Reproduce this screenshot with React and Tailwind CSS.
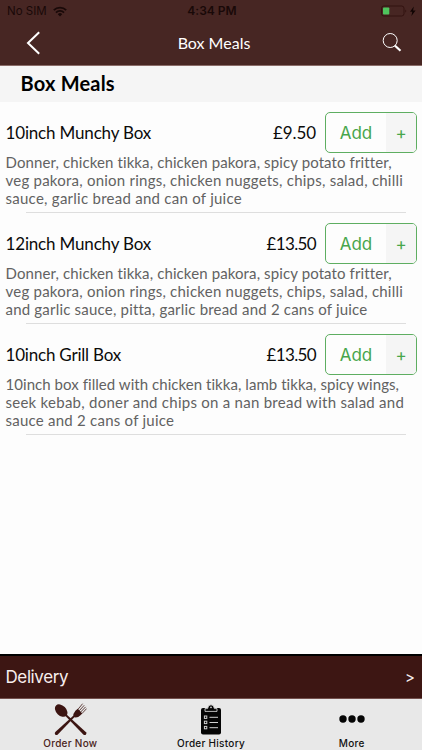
const items = [
  {
    name: '10inch Munchy Box',
    price: '£9.50',
    nameTracking: 'tracking-[-0.17px]',
    priceTracking: 'tracking-[-0.1px]',
    lines: [
      { text: 'Donner, chicken tikka, chicken pakora, spicy potato fritter,', tracking: 'tracking-[0.11px]' },
      { text: 'veg pakora, onion rings, chicken nuggets, chips, salad, chilli', tracking: 'tracking-[0.23px]' },
      { text: 'sauce, garlic bread and can of juice', tracking: 'tracking-[0.26px]' },
    ],
  },
  {
    name: '12inch Munchy Box',
    price: '£13.50',
    nameTracking: 'tracking-[-0.17px]',
    priceTracking: 'tracking-[-0.65px]',
    lines: [
      { text: 'Donner, chicken tikka, chicken pakora, spicy potato fritter,', tracking: 'tracking-[0.11px]' },
      { text: 'veg pakora, onion rings, chicken nuggets, chips, salad, chilli', tracking: 'tracking-[0.23px]' },
      { text: 'and garlic sauce, pitta, garlic bread and 2 cans of juice', tracking: 'tracking-[0.2px]' },
    ],
  },
  {
    name: '10inch Grill Box',
    price: '£13.50',
    nameTracking: 'tracking-[-0.2px]',
    priceTracking: 'tracking-[-0.65px]',
    lines: [
      { text: '10inch box filled with chicken tikka, lamb tikka, spicy wings,', tracking: 'tracking-[0.05px]' },
      { text: 'seek kebab, doner and chips on a nan bread with salad and', tracking: 'tracking-[0.26px]' },
      { text: 'sauce and 2 cans of juice', tracking: 'tracking-[0.24px]' },
    ],
  },
];

const WifiIcon = () => (
  <svg className="ml-[6px] h-[11px] w-[14px]" viewBox="0 0 14 11" fill="none" stroke="currentColor" strokeWidth="1.8">
    <path d="M0.8 4.2a8.8 8.8 0 0 1 12.4 0" />
    <path d="M3 6.6a5.7 5.7 0 0 1 8 0" />
    <path d="M7 10.4L4.8 8.2a3.1 3.1 0 0 1 4.4 0z" fill="currentColor" stroke="none" />
  </svg>
);

const BatteryIcon = () => (
  <svg className="h-[12px] w-[36px]" viewBox="0 0 36 12" fill="none">
    <rect x="0.5" y="1" width="22.5" height="10" rx="2.3" stroke="#331210" strokeWidth="1" />
    <rect x="2" y="2.5" width="6.3" height="7" rx="0.8" fill="#4fc45d" />
    <path d="M24.3 4.4c1.3.5 1.3 2.7 0 3.2z" fill="#331210" />
    <path d="M32.8 1.5L29 6.7h2.3L30.4 11l4.2-5.5h-2.5z" fill="#100403" />
  </svg>
);

const SearchIcon = () => (
  <svg className="-mt-[2px] h-[20px] w-[20px]" viewBox="0 0 20 20" fill="none" stroke="#fff">
    <circle cx="8.2" cy="7.5" r="7" strokeWidth="1" />
    <path d="M12.8 12.5L18.5 17.8" strokeWidth="2.2" />
  </svg>
);

const CutleryIcon = () => (
  <svg className="h-[33px] w-[33px]" viewBox="0 0 33 33" fill="#3c1512">
    <ellipse cx="7.2" cy="7.6" rx="5" ry="7.3" transform="rotate(-45 7.2 7.6)" />
    <path d="M11 12.4L12.3 11.2L32 29.2Q33 30.6 31.8 31.7Q30.6 32.6 29.3 31.5Z" />
    <path d="M19.5 12.5L20.8 13.8L3.8 31.5Q2.3 32.5 1.2 31.5Q.2 30.3 1.3 29Z" />
    <path d="M19.3 14Q18.8 10.5 21.4 7.7L23.8 5.8L28.3 10.5L26.2 12.5Q23.5 15.3 19.3 14Z" />
    <path d="M23.8 6.5L28.6 .7M25.2 7.8L30.2 2.3M26.6 9.1L31.6 3.9M28 10.5L32.6 5.6" stroke="#3c1512" strokeWidth="0.8" />
  </svg>
);

const ClipboardIcon = () => (
  <svg className="h-[31px] w-[22px]" viewBox="0 0 22 31" fill="#050505">
    <rect x="1" y="4" width="20" height="26.5" rx="2" />
    <path d="M5 4.6h2.6Q8 .8 11 .8T14.4 4.6h2.6v2.8H5z" stroke="#e8e8e8" strokeWidth="0.8" />
    <circle cx="11" cy="3.4" r="0.8" fill="#e8e8e8" />
    {[12, 17.2, 22.4].map((y) => (
      <g key={y} stroke="#d0d0d0" fill="none">
        <rect x="4.4" y={y} width="2.4" height="2.4" strokeWidth="1" />
        <path d={`M9.5 ${y + 1.3}H18`} strokeWidth="1" />
      </g>
    ))}
  </svg>
);

const MenuItem = ({ item }) => (
  <article className="h-[111px] pt-[10px] pr-[5px] pl-[5.5px]">
    <div className="flex h-[41px] items-center">
      <h2 className={`flex-1 text-[17px] text-[#0b0b0b] ${item.nameTracking}`}>{item.name}</h2>
      <span className={`mr-[9px] text-[17px] text-[#0b0b0b] ${item.priceTracking}`}>{item.price}</span>
      <button className="flex h-[41px] w-[92px] overflow-hidden rounded-[5px] border-[1.5px] border-[#5eae61] font-['Inter',sans-serif] text-[#47a64b]">
        <span className="flex flex-1 items-center justify-center pt-[2px] text-[17px]">Add</span>
        <span className="flex w-[30px] items-center justify-center bg-[#f5f5f5] pt-[2px] text-[17px]">+</span>
      </button>
    </div>
    <p className="text-[15px] leading-[18px] whitespace-nowrap text-[#626262]">
      {item.lines.map((line) => (
        <span key={line.text} className={`block ${line.tracking}`}>{line.text}</span>
      ))}
    </p>
    <div className="mt-[5px] mr-[11px] ml-[20.5px] h-px bg-[#dedede]" />
  </article>
);

const App = () => {
  return (
    <div className="flex h-[750px] w-[422px] flex-col overflow-hidden bg-[#fdfdfd] font-['Lato',sans-serif] [font-variant-ligatures:none]">
      <header className="h-[66px] border-b border-[#8a6c68] bg-[#472623]">
        <div className="grid h-[22px] grid-cols-3 items-center pr-[5px] pl-[7px] font-['Inter',sans-serif] text-[11.5px] text-[#190908]">
          <div className="flex items-center pt-px">No SIM<WifiIcon /></div>
          <span className="text-center text-[12px] font-semibold">4:34 PM</span>
          <div className="flex justify-end"><BatteryIcon /></div>
        </div>
        <div className="grid h-[43px] grid-cols-3 items-center pr-[20px] pl-[26px] text-white">
          <svg className="-mt-[2px] h-[24px] w-[15px]" viewBox="0 0 15 24" fill="none" stroke="#fff" strokeWidth="2">
            <path d="M13.2 1.3L2 12l11.2 10.7" />
          </svg>
          <h1 className="-mt-[2px] text-center text-[16px]">Box Meals</h1>
          <div className="flex justify-end"><SearchIcon /></div>
        </div>
      </header>

      <div className="flex h-[36px] items-center bg-[#f5f5f5] pb-[2px] pl-[20.5px] text-[20px] font-bold tracking-[0.2px] text-black">Box Meals</div>

      <main className="flex-1">
        {items.map((item) => <MenuItem key={item.name} item={item} />)}
      </main>

      <div className="flex h-[45px] items-center justify-between border-t-2 border-b border-t-black border-b-[#73504d] bg-[#3d1613] pr-[7px] pl-[5.5px] font-['Inter',sans-serif] text-[#f7eeed]">
        <span className="pt-[2px] text-[17px] tracking-[-0.4px]">Delivery</span>
        <span className="pt-[2px] text-[15px]">&gt;</span>
      </div>

      <nav className="grid h-[51px] grid-cols-3 bg-[#e8e8e8] font-['Inter',sans-serif] text-[10px] font-medium tracking-[0.27px] text-[#111]">
        <div className="flex flex-col items-center pt-[4px] text-[#4a2320]">
          <CutleryIcon />
          <span className="leading-[14px]">Order Now</span>
        </div>
        <div className="flex flex-col items-center pt-[5px]">
          <ClipboardIcon />
          <span className="mt-px leading-[14px]">Order History</span>
        </div>
        <div className="flex flex-col items-center pt-[16px]">
          <svg className="h-[8px] w-[26px]" viewBox="0 0 26 8" fill="#050505">
            <circle cx="4" cy="4" r="3.7" />
            <circle cx="13" cy="4" r="3.7" />
            <circle cx="22" cy="4" r="3.7" />
          </svg>
          <span className="mt-[13px] leading-[14px]">More</span>
        </div>
      </nav>
    </div>
  );
};

export default App;
